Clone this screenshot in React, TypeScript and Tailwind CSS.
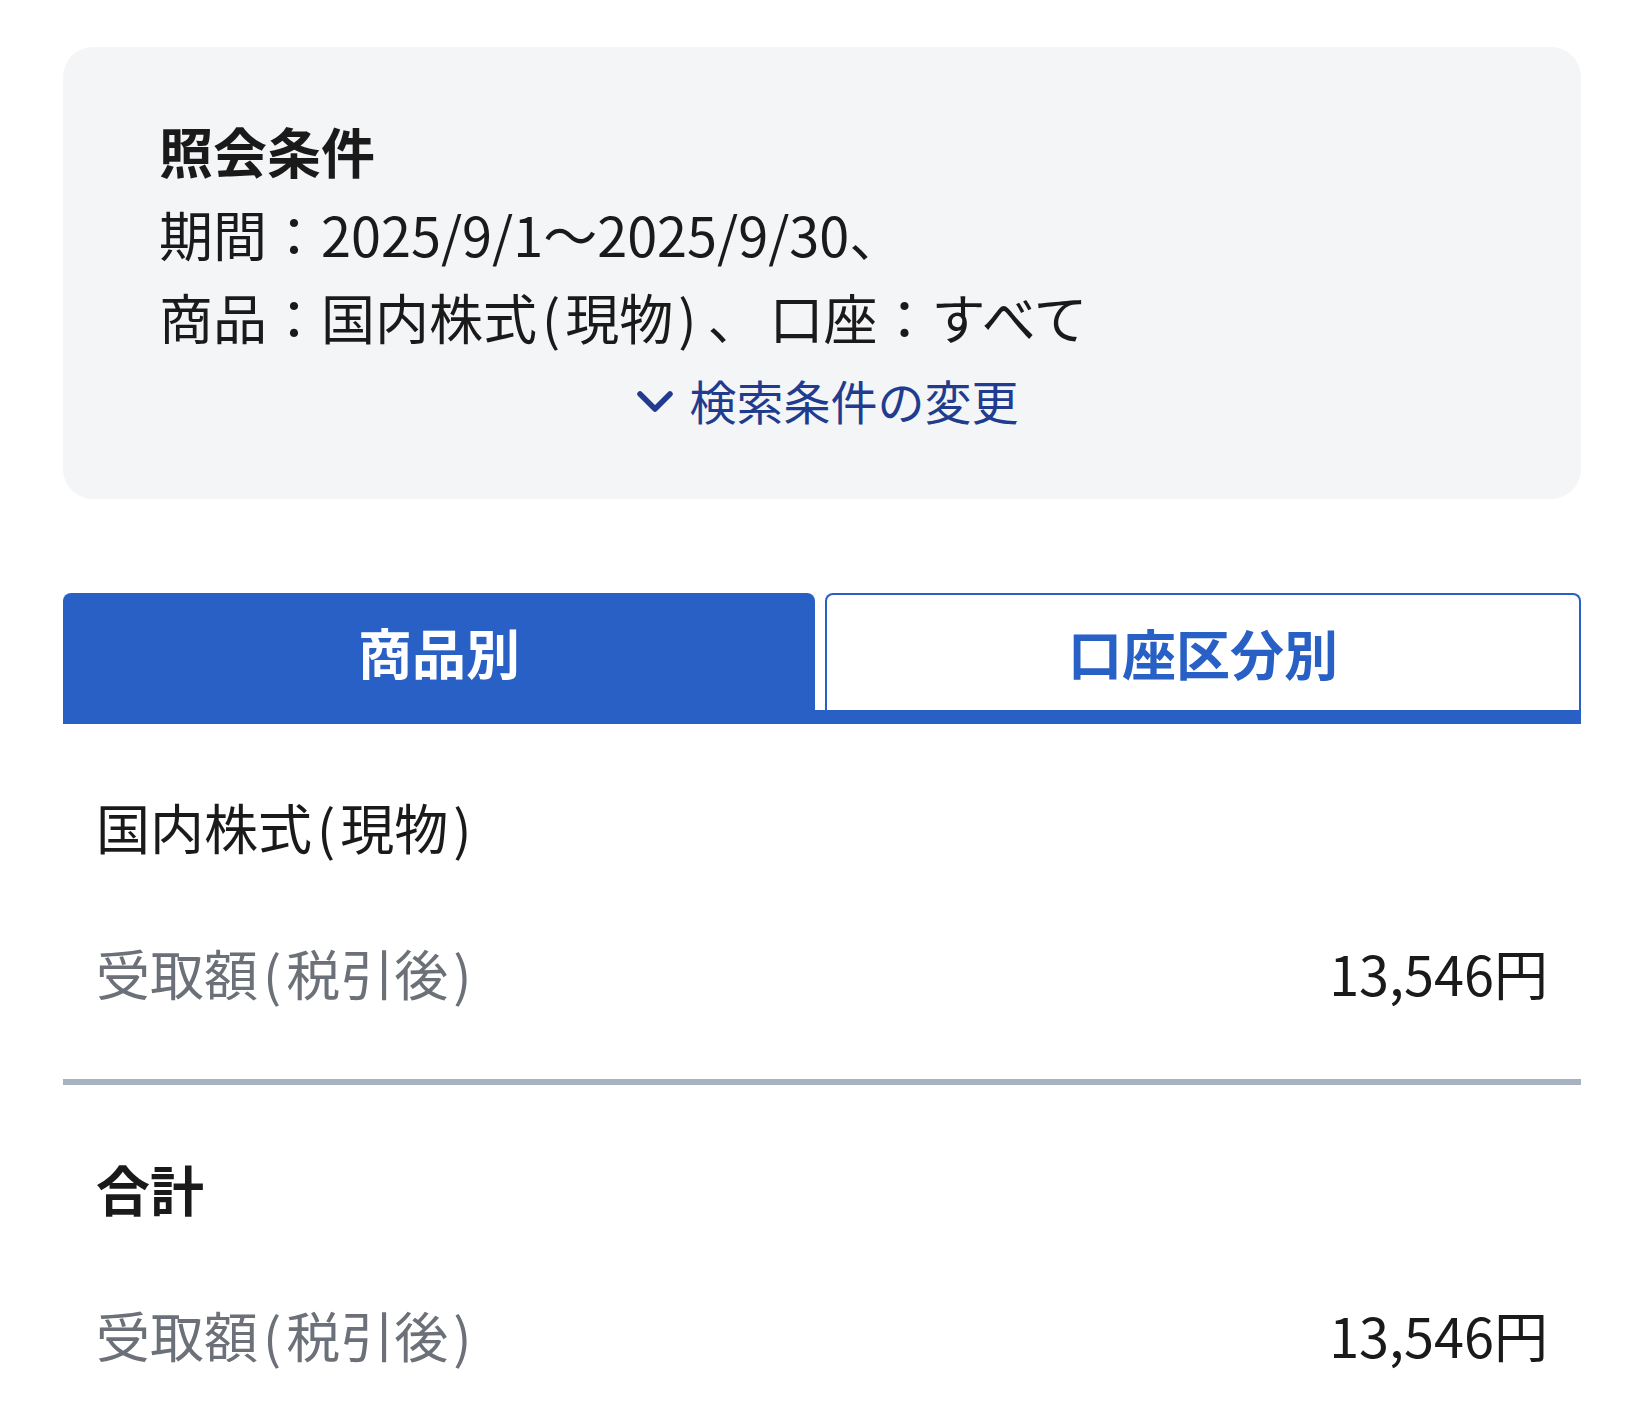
const rows = [{ title: '国内株式(現物)', amount: '13,546円' }];

// parens are wider in the original font, pad them a little
const Txt = ({ text }: { text: string }) => (
  <>
    {text.split(/([()])/).map((part, i) =>
      part === '(' || part === ')' ? (
        <span key={i} className="px-[5px]">
          {part}
        </span>
      ) : (
        part
      ),
    )}
  </>
);

const AmountRow = ({ label, amount }: { label: string; amount: string }) => (
  <div className="flex h-[146px] items-center justify-between">
    <span className="text-[#6c7078]">
      <Txt text={label} />
    </span>
    <span className="text-[#1a1a1a]">{amount}</span>
  </div>
);

const App = () => {
  return (
    <div
      className="min-h-[1421px] bg-white px-[63px] pt-[47px] text-[54px] leading-[80px] text-[#1a1a1a]"
      style={{ fontFamily: '"Noto Sans CJK JP", "Noto Sans", sans-serif' }}
    >
      {/* search conditions */}
      <div className="rounded-[30px] bg-[#f4f5f7] pl-[96px] pr-8 pt-[62px] pb-[58px]">
        <div className="leading-[83px]">
          <div className="font-bold">照会条件</div>
          <div>期間：2025/9/1～2025/9/30、</div>
          <div>
            商品：
            <Txt text="国内株式(現物)" />
            <span className="pl-[6px] pr-[8px]">、</span>口座：すべて
          </div>
        </div>
        <div className="-ml-[54px] flex items-center justify-center gap-[16px] text-[47px] leading-[83px] text-[#213b8e]">
          <svg width="38" height="24" viewBox="0 0 38 24" fill="none" className="mt-[4px]">
            <path d="M4 4 L19 19 L34 4" stroke="currentColor" strokeWidth="5.5" strokeLinecap="round" strokeLinejoin="round" />
          </svg>
          <span>検索条件の変更</span>
        </div>
      </div>

      {/* tabs */}
      <div className="mt-[94px]">
        <div className="flex items-end gap-[10px]">
          <button className="flex h-[117px] flex-1 items-center justify-center rounded-t-[8px] bg-[#2860c5] font-bold text-white">
            商品別
          </button>
          <button className="flex h-[117px] flex-1 items-center justify-center rounded-t-[8px] border-2 border-b-0 border-[#2860c5] bg-white font-bold text-[#2860c5]">
            口座区分別
          </button>
        </div>
        <div className="h-[14px] bg-[#2860c5]" />
      </div>

      <div className="px-[33px] pt-[30px]">
        {rows.map((row) => (
          <div key={row.title}>
            <div className="flex h-[146px] items-center">
              <span>
                <Txt text={row.title} />
              </span>
            </div>
            <AmountRow label="受取額(税引後)" amount={row.amount} />
          </div>
        ))}
      </div>

      <div className="mt-[33px] h-[6px] bg-[#a9b2c2]" />

      <div className="px-[33px] pt-[31px]">
        <div className="flex h-[146px] items-center font-bold">合計</div>
        <AmountRow label="受取額(税引後)" amount="13,546円" />
      </div>
    </div>
  );
};

export default App;
